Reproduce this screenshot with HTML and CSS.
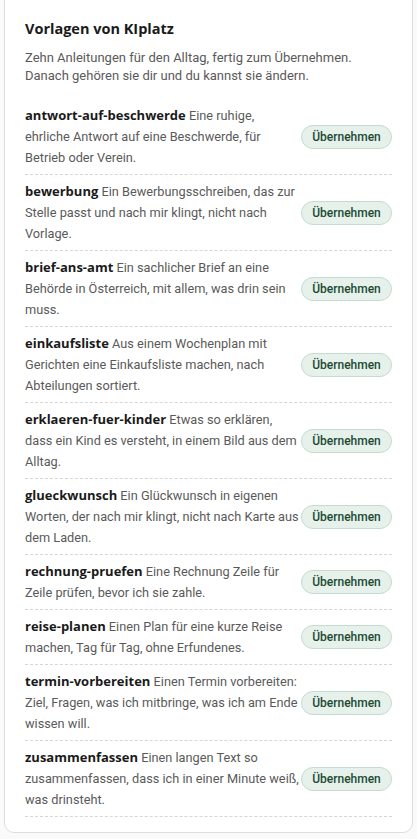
FILE: index.html
```html
<!DOCTYPE html>
<html lang="de">
<head>
    <meta charset="UTF-8">
    <meta name="viewport" content="width=device-width, initial-scale=1.0">
    <title>Vorlagen von KIplatz</title>
    <link rel="stylesheet" href="styles.css">
</head>
<body>
    <div class="panel">
        <h2>Vorlagen von KIplatz</h2>
        <p class="intro">Zehn Anleitungen für den Alltag, fertig zum Übernehmen. Danach gehören sie dir und du kannst sie ändern.</p>

        <ul class="template-list">
            <li class="template">
                <div class="template-text"><b>antwort-auf-beschwerde</b> Eine ruhige, ehrliche Antwort auf eine Beschwerde, für Betrieb oder Verein.</div>
                <button class="take-button">Übernehmen</button>
            </li>
            <li class="template">
                <div class="template-text"><b>bewerbung</b> Ein Bewerbungsschreiben, das zur Stelle passt und nach mir klingt, nicht nach Vorlage.</div>
                <button class="take-button">Übernehmen</button>
            </li>
            <li class="template">
                <div class="template-text"><b>brief-ans-amt</b> Ein sachlicher Brief an eine Behörde in Österreich, mit allem, was drin sein muss.</div>
                <button class="take-button">Übernehmen</button>
            </li>
            <li class="template">
                <div class="template-text"><b>einkaufsliste</b> Aus einem Wochenplan mit Gerichten eine Einkaufsliste machen, nach Abteilungen sortiert.</div>
                <button class="take-button">Übernehmen</button>
            </li>
            <li class="template">
                <div class="template-text"><b>erklaeren-fuer-kinder</b> Etwas so erklären, dass ein Kind es versteht, in einem Bild aus dem Alltag.</div>
                <button class="take-button">Übernehmen</button>
            </li>
            <li class="template">
                <div class="template-text"><b>glueckwunsch</b> Ein Glückwunsch in eigenen Worten, der nach mir klingt, nicht nach Karte aus dem Laden.</div>
                <button class="take-button">Übernehmen</button>
            </li>
            <li class="template">
                <div class="template-text"><b>rechnung-pruefen</b> Eine Rechnung Zeile für Zeile prüfen, bevor ich sie zahle.</div>
                <button class="take-button">Übernehmen</button>
            </li>
            <li class="template">
                <div class="template-text"><b>reise-planen</b> Einen Plan für eine kurze Reise machen, Tag für Tag, ohne Erfundenes.</div>
                <button class="take-button">Übernehmen</button>
            </li>
            <li class="template">
                <div class="template-text"><b>termin-vorbereiten</b> Einen Termin vorbereiten: Ziel, Fragen, was ich mitbringe, was ich am Ende wissen will.</div>
                <button class="take-button">Übernehmen</button>
            </li>
            <li class="template">
                <div class="template-text"><b>zusammenfassen</b> Einen langen Text so zusammenfassen, dass ich in einer Minute weiß, was drinsteht.</div>
                <button class="take-button">Übernehmen</button>
            </li>
        </ul>
    </div>
</body>
</html>
```

FILE: styles.css
```css
/* Page */
body {
    margin: 0;
    padding: 0;
    font-family: Roboto, "Open Sans", Arial, sans-serif;
    background-color: #fafafa;
    color: #1f1f1f;
}

.panel {
    margin: -1px 4px 5px 4px;
    padding: 18px 20px 15px 20px;
    background-color: #fff;
    border: 1px solid #dcdfe0;
    border-radius: 0 0 10px 10px;
}

.panel h2 {
    margin: 0;
    font-family: "Open Sans", Roboto, sans-serif;
    font-size: 14.5px;
    font-weight: 700;
    line-height: 22px;
    color: #1a1a1a;
}

.intro {
    margin: 9px 0 20px 0;
    font-size: 13px;
    line-height: 18px;
    color: #5a5a5a;
}

/* Template rows */
.template-list {
    list-style: none;
    margin: 0;
    padding: 0;
}

.template {
    display: flex;
    align-items: center;
    gap: 2px;
    padding: 6px 0;
    border-bottom: 1px dashed #d6d6d6;
}

.template:first-child {
    padding-top: 0;
}

.template-text {
    flex: 1;
    font-size: 12.75px;
    line-height: 21px;
    color: #5a5a5a;
}

.template-text b {
    font-family: "Open Sans", Roboto, sans-serif;
    font-size: 13px;
    font-weight: 700;
    color: #1a1a1a;
}

.take-button {
    flex-shrink: 0;
    width: 91px;
    height: 24px;
    padding: 0;
    background-color: #e6f1eb;
    color: #1d4a33;
    border: 1px solid #c3dccd;
    border-radius: 12px;
    font-family: inherit;
    font-size: 12px;
    font-weight: 500;
    cursor: pointer;
}

.take-button:hover {
    background-color: #d8eadf;
}
```
